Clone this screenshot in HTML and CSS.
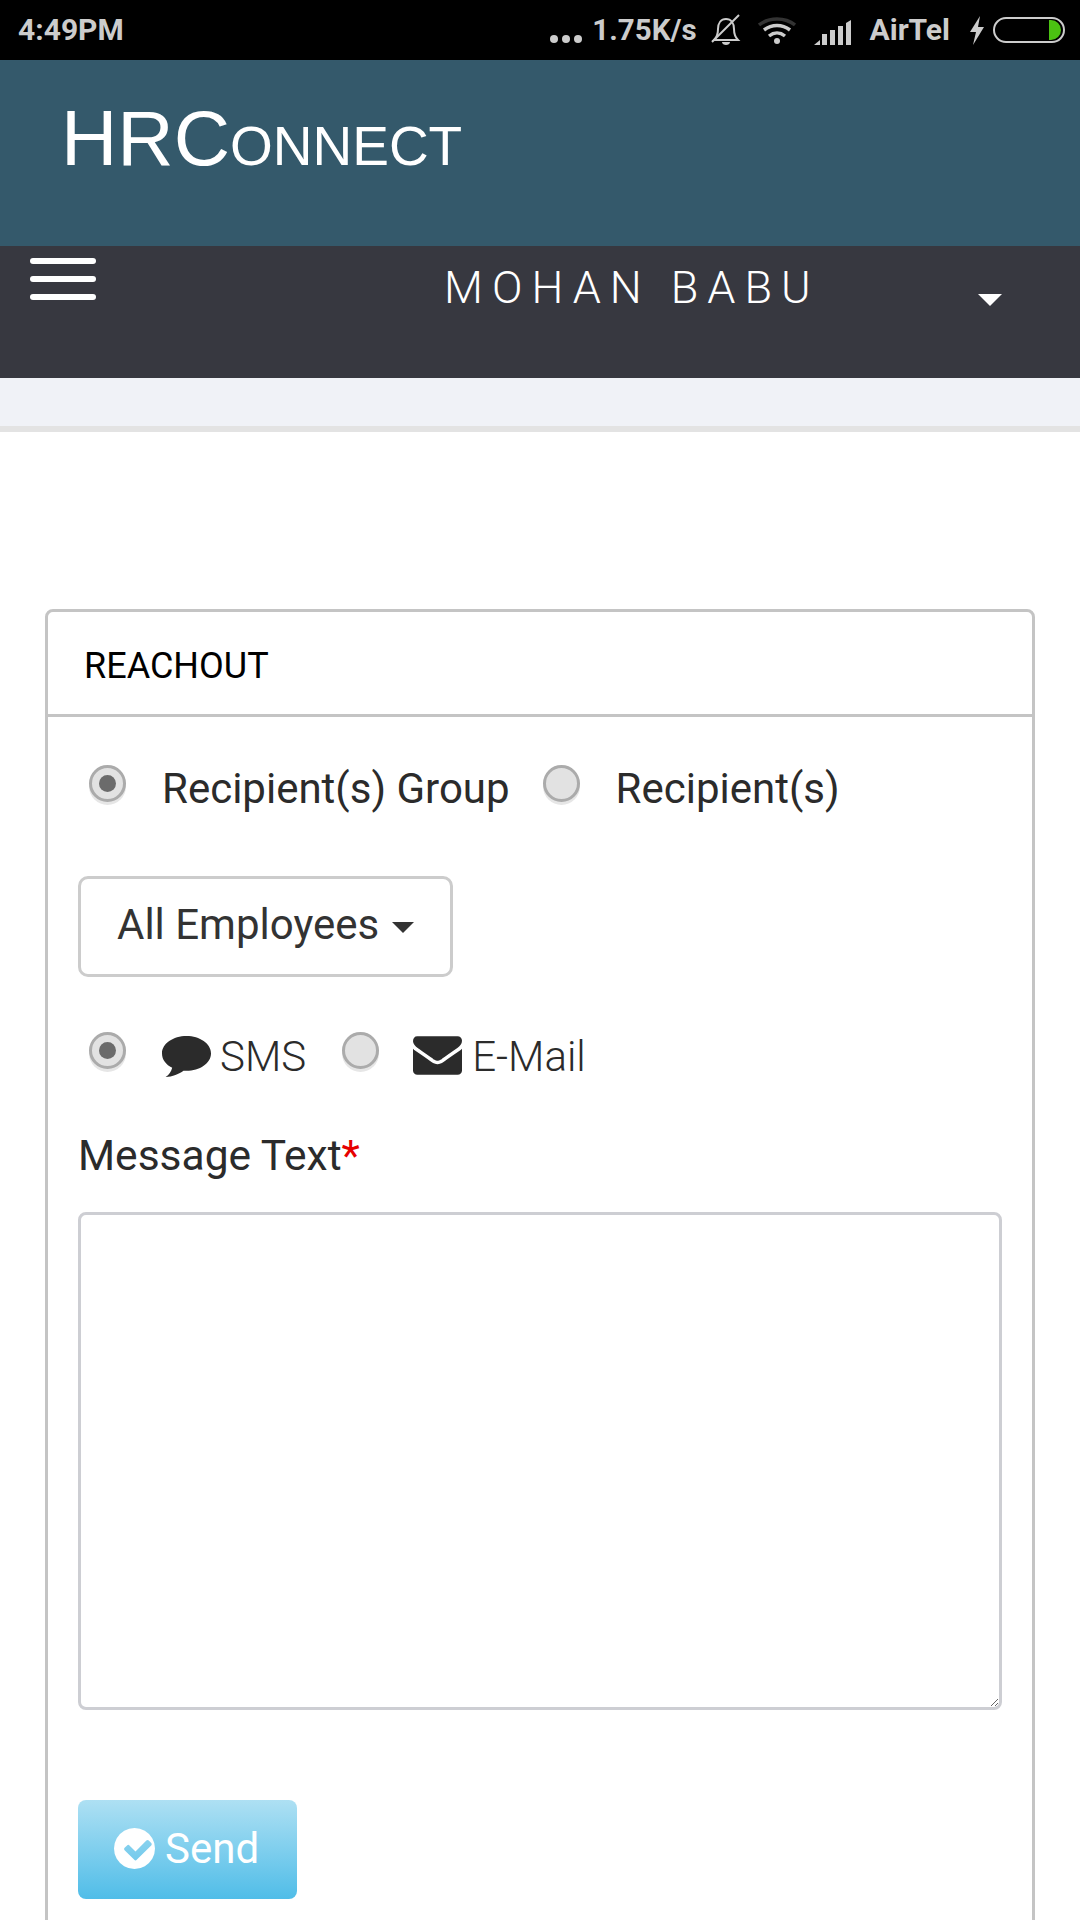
FILE: index.html
```html
<!DOCTYPE html>
<html lang="en">
<head>
    <meta charset="UTF-8">
    <meta name="viewport" content="width=device-width, initial-scale=1.0">
    <title>HRConnect</title>
    <link rel="stylesheet" href="styles.css">
</head>
<body>
    <!-- Phone status bar -->
    <div class="status-bar">
        <span class="status-time">4:49PM</span>
        <div class="status-right">
            <svg class="icon-dots" viewBox="0 0 32 8"><circle cx="4" cy="4" r="4"/><circle cx="16" cy="4" r="4"/><circle cx="28" cy="4" r="4"/></svg>
            <span class="status-speed">1.75K/s</span>
            <svg class="icon-bell" viewBox="0 0 30 32"><path d="M3 26c3-3 4-6 4-11 0-6 3-10 8-10s8 4 8 10c0 5 1 8 4 11z" fill="none" stroke="#ccc" stroke-width="2"/><path d="M1 28L28 1" stroke="#ccc" stroke-width="2"/><path d="M11 28h8c0 2-2 3-4 3s-4-1-4-3z" fill="#ccc"/></svg>
            <svg class="icon-wifi" viewBox="0 0 38 28"><path d="M1 9C11 1 27 1 37 9" fill="none" stroke="#333" stroke-width="3.5"/><path d="M6 14c8-6 18-6 26 0" fill="none" stroke="#ccc" stroke-width="3.5"/><path d="M11 20c5-4 11-4 16 0" fill="none" stroke="#ccc" stroke-width="3.5"/><circle cx="19" cy="25" r="3" fill="#ccc"/></svg>
            <svg class="icon-signal" viewBox="0 0 37 25"><path d="M0 25l6-5v5z"/><rect x="8" y="14" width="5" height="11"/><rect x="16" y="10" width="5" height="15"/><rect x="24" y="6" width="5" height="19"/><path d="M32 3l5-3v25h-5z"/></svg>
            <span class="status-carrier">AirTel</span>
            <svg class="icon-bolt" viewBox="0 0 16 29"><path d="M11 0L1 16h6L4 29l11-18H9z"/></svg>
            <div class="battery"><span class="battery-level"></span></div>
        </div>
    </div>

    <header class="brand">
        <h1>HRConnect</h1>
    </header>

    <nav class="user-bar">
        <div class="hamburger"><span></span><span></span><span></span></div>
        <span class="user-name">MOHAN BABU</span>
        <span class="user-caret"></span>
    </nav>
    <div class="sub-bar"></div>

    <main class="content">
        <section class="card">
            <div class="card-title">REACHOUT</div>
            <div class="card-body">
                <div class="radio-row">
                    <span class="radio checked"></span>
                    <span class="radio-label">Recipient(s) Group</span>
                    <span class="radio second"></span>
                    <span class="radio-label">Recipient(s)</span>
                </div>

                <div class="dropdown">All Employees <span class="dropdown-caret"></span></div>

                <div class="radio-row channel-row">
                    <span class="radio checked"></span>
                    <svg class="icon-comment" viewBox="0 0 48 40"><path d="M24 0c13 0 24 7.500 24 17s-11 17-24 17c-1 0-2 0-3-.1C17 37 10 40 3.500 40 7 38 9 35 10 31 4 28 0 23 0 17 0 7.500 11 0 24 0z"/></svg>
                    <span class="channel-label">SMS</span>
                    <span class="radio email"></span>
                    <svg class="icon-envelope" viewBox="0 256 1792 1408"><path d="M1792 710v794q0 66-47 113t-113 47h-1472q-66 0-113-47t-47-113v-794q44 49 101 87 362 246 497 345 57 42 92.5 65.5t94.5 48 110 24.5h2q51 0 110-24.5t94.5-48 92.5-65.5q170-123 498-345 57-39 100-87zm0-294q0 79-49 151t-122 123q-376 261-468 325-10 7-42.5 30.5t-54 38-52 32.5-57.5 27-50 9h-2q-23 0-50-9t-57.5-27-52-32.5-54-38-42.5-30.5q-91-64-262-182.5t-205-142.5q-62-42-117-115.5t-55-136.5q0-78 41.5-130t118.5-52h1472q65 0 112.5 47t47.5 113z"/></svg>
                    <span class="channel-label">E-Mail</span>
                </div>

                <label class="message-label" for="message">Message Text<span class="required">*</span></label>
                <textarea id="message" class="message-box"></textarea>

                <button class="send-btn" type="button">
                    <svg class="icon-check" viewBox="0 128 1536 1536"><path fill-rule="evenodd" d="M1412 734q0-28-18-46l-91-90q-19-19-45-19t-45 19l-408 407-226-226q-19-19-45-19t-45 19l-91 90q-18 18-18 46 0 27 18 45l362 362q19 19 45 19 27 0 46-19l543-543q18-18 18-45zm124 162q0 209-103 385.5t-279.5 279.5-385.5 103-385.5-103-279.5-279.5-103-385.5 103-385.5 279.5-279.5 385.5-103 385.5 103 279.5 279.5 103 385.5z"/></svg>
                    Send
                </button>
            </div>
        </section>
    </main>
</body>
</html>
```

FILE: styles.css
```css
html, body {
    margin: 0;
    padding: 0;
    height: 1920px;
    overflow: hidden;
    background: #fff;
    font-family: 'Roboto', sans-serif;
}

/* status bar */
.status-bar {
    height: 60px;
    background: #000;
    color: #ccc;
    display: flex;
    justify-content: space-between;
    align-items: center;
    padding: 0 15px 0 18px;
    box-sizing: border-box;
    font-size: 30px;
    font-weight: 700;
    line-height: 60px;
}
.status-right {
    display: flex;
    align-items: center;
}
.status-right svg {
    fill: #ccc;
    display: block;
}
.icon-dots {
    width: 32px;
    height: 8px;
    margin-top: 18px;
}
.status-speed {
    margin-left: 10px;
    font-size: 29.5px;
}
.icon-bell {
    width: 32px;
    height: 32px;
    margin-left: 13px;
}
.icon-wifi {
    width: 38px;
    height: 28px;
    margin-left: 16px;
}
.icon-signal {
    width: 37px;
    height: 25px;
    margin-left: 18px;
    margin-top: 4px;
}
.status-carrier {
    margin-left: 19px;
}
.icon-bolt {
    width: 16px;
    height: 29px;
    margin-left: 19px;
}
.battery {
    width: 72px;
    height: 26px;
    margin-left: 8px;
    border: 2.5px solid #ccc;
    border-radius: 13px;
    box-sizing: border-box;
    display: flex;
    justify-content: flex-end;
    padding: 1px 2px;
}
.battery-level {
    width: 12px;
    background: #4bc212;
    border-radius: 0 10px 10px 0;
}

/* header */
.brand {
    height: 186px;
    background: #34596b;
    color: #fff;
    padding: 36px 0 0 61px;
    box-sizing: border-box;
}
.brand h1 {
    margin: 0;
    font-family: 'Liberation Sans', sans-serif;
    font-size: 78px;
    font-weight: 400;
    font-variant: small-caps;
    line-height: 84px;
}

.user-bar {
    height: 132px;
    background: #373840;
    color: #fff;
    display: flex;
    align-items: flex-start;
    padding: 12px 0 0 30px;
    box-sizing: border-box;
}
.hamburger {
    width: 66px;
    display: flex;
    flex-direction: column;
    gap: 12px;
}
.hamburger span {
    height: 6px;
    background: #fff;
    border-radius: 3px;
}
.user-name {
    margin-left: 348px;
    font-size: 45px;
    font-weight: 300;
    letter-spacing: 0.2em;
    line-height: 60px;
    white-space: nowrap;
}
.user-caret {
    margin: 36px 78px 0 auto;
    border-left: 12px solid transparent;
    border-right: 12px solid transparent;
    border-top: 12px solid #fff;
}
.sub-bar {
    height: 48px;
    background: #f0f2f7;
    border-bottom: 6px solid #e3e3e3;
}

/* card */
.content {
    padding: 177px 45px 0 45px;
}
.card {
    border: 3px solid #c4c4c4;
    border-radius: 8px;
}
.card-title {
    height: 102px;
    line-height: 109px;
    padding-left: 36px;
    font-size: 36px;
    color: #000;
    border-bottom: 3px solid #c4c4c4;
}
.card-body {
    padding: 48px 30px 60px 30px;
    color: #2b2b2b;
}
.radio-row {
    display: flex;
    align-items: flex-start;
    font-size: 42px;
    line-height: 48px;
    padding-left: 11px;
}
.radio {
    width: 37px;
    height: 37px;
    box-sizing: border-box;
    border: 3px solid #ababab;
    border-radius: 50%;
    background: #e2e2e2;
    box-shadow: 0 3px 0 #e6e6e6;
    margin-right: 36px;
    display: flex;
    align-items: center;
    justify-content: center;
    flex: none;
}
.radio.checked::after {
    content: '';
    width: 17px;
    height: 17px;
    border-radius: 50%;
    background: #6b6b6b;
}
.radio.second {
    margin-left: 33px;
}
.radio-label {
    white-space: nowrap;
}
.dropdown {
    width: 375px;
    height: 101px;
    margin-top: 63px;
    box-sizing: border-box;
    border: 3px solid #ccc;
    border-radius: 10px;
    padding-left: 36px;
    font-size: 42px;
    line-height: 91px;
    color: #333;
}
.dropdown-caret {
    display: inline-block;
    vertical-align: middle;
    margin-left: 2px;
    border-left: 11px solid transparent;
    border-right: 11px solid transparent;
    border-top: 11px solid #333;
}
.channel-row {
    margin-top: 55px;
}
.channel-row .radio {
    margin-right: 0;
}
.channel-label {
    font-weight: 300;
    padding-top: 1px;
}
.icon-comment {
    width: 49px;
    height: 41px;
    margin: 4px 9px 0 36px;
    fill: #2b2b2b;
    flex: none;
}
.radio.email {
    margin-left: 36px;
}
.icon-envelope {
    width: 49px;
    height: 39px;
    margin: 4px 10px 0 34px;
    fill: #2b2b2b;
    flex: none;
}
.message-label {
    display: block;
    margin-top: 51px;
    font-size: 42.5px;
    line-height: 48px;
}
.required {
    color: #e60000;
}
.message-box {
    display: block;
    width: 924px;
    height: 498px;
    margin-top: 32px;
    box-sizing: border-box;
    border: 3px solid #cdced3;
    border-radius: 8px;
    background: #fff;
    outline: none;
}
.send-btn {
    display: flex;
    align-items: center;
    gap: 10px;
    width: 219px;
    height: 99px;
    margin-top: 90px;
    padding: 0 0 2px 36px;
    box-sizing: border-box;
    border: none;
    border-radius: 8px;
    background: linear-gradient(to bottom, #aee0f3, #50bde8);
    color: #fff;
    font-family: 'Roboto', sans-serif;
    font-size: 42px;
}
.icon-check {
    width: 41px;
    height: 41px;
    fill: #fff;
    flex: none;
}
```
